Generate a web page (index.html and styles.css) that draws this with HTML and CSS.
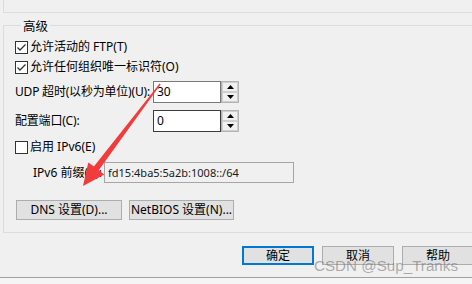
FILE: index.html
```html
<!DOCTYPE html>
<html lang="zh-CN">
<head>
  <meta charset="UTF-8" />
  <title>高级设置</title>
  <link rel="stylesheet" href="styles.css">
</head>
<body>
  <div class="dialog">
    <!-- bottom edge of the group above -->
    <div class="prevGroup"></div>

    <!-- 高级 group -->
    <fieldset class="group">
      <legend>高级</legend>

      <label class="check rowFirst">
        <span class="box"><svg width="11" height="11" viewBox="0 0 11 11"><polyline points="1.5,5.5 4,8 9.5,2.5" fill="none" stroke="#333" stroke-width="1.3"/></svg></span>
        允许活动的 FTP(T)
      </label>
      <label class="check">
        <span class="box"><svg width="11" height="11" viewBox="0 0 11 11"><polyline points="1.5,5.5 4,8 9.5,2.5" fill="none" stroke="#333" stroke-width="1.3"/></svg></span>
        允许任何组织唯一标识符(O)
      </label>

      <div class="field rowUdp">
        <span class="fieldLabel">UDP 超时(以秒为单位)(U):</span>
        <span class="textBox">30</span>
        <span class="spinner">
          <span class="spinBtn"><svg width="7" height="4" viewBox="0 0 7 4"><polygon points="0,4 7,4 3.5,0" fill="#000"/></svg></span>
          <span class="spinBtn"><svg width="7" height="4" viewBox="0 0 7 4"><polygon points="0,0 7,0 3.5,4" fill="#000"/></svg></span>
        </span>
      </div>

      <div class="field rowPort">
        <span class="fieldLabel">配置端口(C):</span>
        <span class="textBox dark">0</span>
        <span class="spinner">
          <span class="spinBtn"><svg width="7" height="4" viewBox="0 0 7 4"><polygon points="0,4 7,4 3.5,0" fill="#000"/></svg></span>
          <span class="spinBtn"><svg width="7" height="4" viewBox="0 0 7 4"><polygon points="0,0 7,0 3.5,4" fill="#000"/></svg></span>
        </span>
      </div>

      <label class="check rowIpv6">
        <span class="box"></span>
        启用 IPv6(E)
      </label>

      <div class="field rowPrefix">
        <span class="prefixLabel">IPv6 前缀(P):</span>
        <span class="prefixBox">fd15:4ba5:5a2b:1008::/64</span>
      </div>

      <div class="groupButtons">
        <button class="btn dnsBtn">DNS 设置(D)...</button>
        <button class="btn netbiosBtn">NetBIOS 设置(N)...</button>
      </div>
    </fieldset>

    <div class="footer">
      <button class="btn footBtn default">确定</button>
      <button class="btn footBtn">取消</button>
      <button class="btn footBtn">帮助</button>
    </div>
    <div class="statusLine"></div>

    <!-- red annotation arrow drawn over the dialog -->
    <svg class="arrow" width="472" height="284" viewBox="0 0 472 284">
      <polygon points="160.6,84.4 98.7,170.2 104.3,174.4 83,186 88.3,162.4 93.9,166.6 159.6,83.6" fill="#f23b3b"/>
    </svg>

    <div class="watermark">CSDN @Sup_Tranks</div>
  </div>
</body>
</html>
```

FILE: styles.css
```css
/* Global */
* { box-sizing: border-box; }
body {
  margin: 0;
  background-color: #f0f0f0;
  font-family: "Noto Sans", "Noto Sans CJK SC", sans-serif;
  font-size: 12px;
  color: #000;
}
.dialog {
  position: relative;
  width: 472px;
  height: 284px;
  overflow: hidden;
}
/* Group above (only its bottom edge shows) */
.prevGroup {
  margin-left: 3px;
  width: 520px;
  height: 13px;
  border-left: 1px solid #dcdcdc;
  border-bottom: 1px solid #dcdcdc;
}
/* 高级 group */
.group {
  margin: 3px 0 0 3px;
  padding: 0 0 12px 11px;
  width: 540px;
  min-width: 0;
  border: 1px solid #dcdcdc;
  display: flex;
  flex-direction: column;
}
.group legend {
  margin-left: 6px;
  padding: 4px 2px 0 2px;
  line-height: 14px;
  font-size: 12.5px;
}
/* Check boxes */
.check {
  display: flex;
  align-items: center;
  gap: 2px;
  height: 20px;
  line-height: 16px;
  white-space: nowrap;
}
.rowFirst { margin-top: 3px; }
.rowIpv6 { margin-top: 5px; }
.box {
  width: 13px;
  height: 13px;
  border: 1px solid #333;
  background-color: #fff;
  display: flex;
  align-items: center;
  justify-content: center;
}
/* Numeric fields */
.field {
  display: flex;
  align-items: center;
  white-space: nowrap;
  line-height: 16px;
}
.rowUdp { margin-top: 4px; height: 22px; }
.rowPort { margin-top: 7px; height: 22px; }
.fieldLabel { width: 138px; letter-spacing: -0.2px; }
.textBox {
  width: 68px;
  height: 22px;
  border: 1px solid #7a7a7a;
  background-color: #fff;
  padding: 2px 3px;
}
.textBox.dark { border-color: #3c3c3c; }
.spinner {
  width: 18px;
  height: 22px;
  border: 1px solid #b4b4b4;
  display: flex;
  flex-direction: column;
}
.spinBtn {
  flex: 1;
  border: 1px solid #cfcfcf;
  display: flex;
  align-items: center;
  justify-content: center;
}
/* IPv6 prefix */
.rowPrefix { margin-top: 5px; height: 21px; }
.prefixLabel {
  margin-left: 18px;
  width: 71px;
  overflow: hidden;
}
.prefixBox {
  width: 190px;
  height: 21px;
  border: 1px solid #a6a6a6;
  padding: 1px 3px;
  font-size: 11px;
  line-height: 17px;
  color: #1a1a1a;
}
/* Buttons */
.btn {
  font-family: inherit;
  font-size: 12px;
  color: #000;
  background-color: #e1e1e1;
  border: 1px solid #adadad;
  padding: 0;
  line-height: 16px;
}
.groupButtons {
  margin-top: 17px;
  display: flex;
  gap: 7px;
  padding-left: 1px;
}
.dnsBtn { width: 106px; height: 20px; }
.netbiosBtn { width: 105px; height: 20px; }
.footer {
  margin-top: 13px;
  padding-left: 242px;
  display: flex;
  gap: 8px;
}
.footBtn { width: 72px; height: 19px; flex-shrink: 0; }
.footBtn.default { border: 2px solid #0078d7; }
.statusLine {
  margin-top: 12px;
  height: 8px;
  border-top: 1px solid #a0a0a0;
  background-color: #f5f5f5;
}
/* Overlays */
.arrow {
  position: absolute;
  left: 0;
  top: 0;
}
.watermark {
  position: absolute;
  left: 314px;
  top: 257px;
  font-family: "Liberation Sans", Arial, sans-serif;
  font-size: 15.2px;
  color: rgba(110, 110, 110, 0.55);
  white-space: nowrap;
}
```
